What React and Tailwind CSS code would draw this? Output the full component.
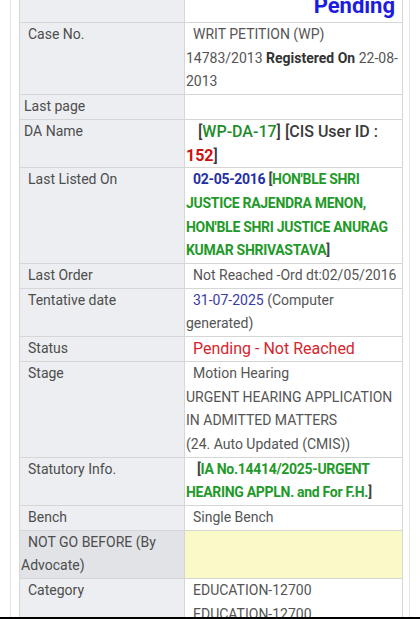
import React from "react";

const L = "bg-[#eceef1] text-[#4d4d4d] text-[14px] leading-[23.7px] pl-[1px] pr-1";
const R = "bg-white text-[#555] text-[14px] leading-[23.7px] pl-[1px] pr-1";

export default function App() {
  return (
    <div className="w-[420px] h-[619px] overflow-hidden bg-white" style={{ fontFamily: "Roboto, 'Noto Sans', Arial, sans-serif" }}>
      <div className="ml-[10px] w-[400px] h-full border-x border-[#e4e4e4] pl-[8px]">
        <div className="w-[384px] border border-[#d6d6d6] bg-[#d6d6d6] grid grid-cols-[164px_217px] gap-px border-t-0">
          {/* top row */}
          <div className={L + " h-[22px]"}></div>
          <div className="bg-white h-[22px] overflow-hidden flex justify-end pr-[7px]">
            <div className="text-[22px] font-bold text-[#1c1ce0] leading-[22px] -mt-[5px]">Pending</div>
          </div>

          <div className={L + " indent-[7px]"}>Case No.</div>
          <div className={R + " indent-[7px]"}>
            WRIT PETITION (WP) 14783/2013 <b className="text-[#333] font-bold">Registered On</b> 22-08-2013
          </div>

          <div className={L + " indent-[3px]"}>Last page</div>
          <div className={R}></div>

          <div className={L + " indent-[3px]"}>DA Name</div>
          <div className={R + " indent-[12px] !text-[16px] font-medium !text-[#3a3a3a]"}>
            [<span className="text-[#1e8c2a]">WP-DA-17</span>] [CIS User ID : <span className="text-[#cc1111] font-bold">152</span>]
          </div>

          <div className={L + " indent-[7px]"}>Last Listed On</div>
          <div className={R + " indent-[7px] font-bold !text-[#444] tracking-[-0.3px]"}>
            <span className="text-[#1f2fa6]">02-05-2016</span> [<span className="text-[#1f9a2a]">HON'BLE SHRI JUSTICE RAJENDRA MENON, HON'BLE SHRI JUSTICE ANURAG KUMAR SHRIVASTAVA</span>]
          </div>

          <div className={L + " indent-[7px]"}>Last Order</div>
          <div className={R + " indent-[7px] whitespace-nowrap"}>Not Reached -Ord dt:02/05/2016</div>

          <div className={L + " indent-[7px]"}>Tentative date</div>
          <div className={R + " indent-[7px]"}>
            <span className="text-[#3b3ba6]">31-07-2025</span> (Computer generated)
          </div>

          <div className={L + " indent-[7px]"}>Status</div>
          <div className={R + " indent-[7px] !text-[16px] !text-[#d6262e]"}>Pending - Not Reached</div>

          <div className={L + " indent-[7px]"}>Stage</div>
          <div className={R}>
            <div className="indent-[7px]">Motion Hearing</div>
            <div>URGENT HEARING APPLICATION IN ADMITTED MATTERS</div>
            <div>(24. Auto Updated (CMIS))</div>
          </div>

          <div className={L + " indent-[7px]"}>Statutory Info.</div>
          <div className={R + " indent-[11px] font-bold !text-[#444] tracking-[-0.3px]"}>
            [<span className="text-[#1f9a2a]">IA No.14414/2025-URGENT HEARING APPLN. and For F.H.</span>]
          </div>

          <div className={L + " indent-[7px]"}>Bench</div>
          <div className={R + " indent-[7px]"}>Single Bench</div>

          <div className={L + " indent-[7px] !bg-[#e1e3e6]"}>NOT GO BEFORE (By Advocate)</div>
          <div className="bg-[#fafac8]"></div>

          <div className={L + " indent-[7px] h-[60px]"}>Category</div>
          <div className={R + " h-[60px]"}>
            <div className="indent-[7px]">EDUCATION-12700</div>
            <div className="indent-[7px]">EDUCATION-12700</div>
          </div>
        </div>
      </div>
      <div className="fixed bottom-0 left-0 w-[420px] h-[2px] bg-black"></div>
    </div>
  );
}
